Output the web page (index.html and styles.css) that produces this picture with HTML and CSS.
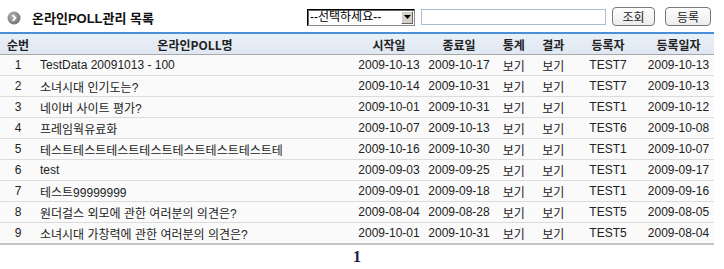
FILE: index.html
```html
<!DOCTYPE html>
<html lang="ko">
<head>
<meta charset="utf-8">
<title>온라인POLL관리 목록</title>
<link rel="stylesheet" href="styles.css">
</head>
<body>
<div class="page">
  <div class="topbar">
    <div class="title">
      <svg class="bullet" width="14" height="14" viewBox="0 0 14 14">
        <defs>
          <radialGradient id="g" cx="40%" cy="35%" r="70%">
            <stop offset="0" stop-color="#b4b4b4"/>
            <stop offset="1" stop-color="#6e6e6e"/>
          </radialGradient>
        </defs>
        <circle cx="7" cy="7" r="6.5" fill="url(#g)"/>
        <path d="M5.6 4.2 L8.4 7 L5.6 9.8" fill="none" stroke="#fff" stroke-width="1.8"/>
      </svg>
      <span>온라인POLL관리 목록</span>
    </div>
    <div class="search">
      <div class="selectbox">
        <span class="seltext">--선택하세요--</span>
        <span class="selarrow">
          <svg width="9" height="6" viewBox="0 0 9 6"><path d="M1 1 L8 1 L4.5 5 Z" fill="#000"/></svg>
        </span>
      </div>
      <input class="keyword" type="text">
      <button class="btn btn-search">조회</button>
      <button class="btn btn-reg">등록</button>
    </div>
  </div>
  <table class="list">
    <thead>
      <tr>
        <th class="c-no">순번</th>
        <th class="c-name">온라인POLL명</th>
        <th class="c-date">시작일</th>
        <th class="c-date">종료일</th>
        <th class="c-view">통계</th>
        <th class="c-view">결과</th>
        <th class="c-user">등록자</th>
        <th class="c-reg">등록일자</th>
      </tr>
    </thead>
    <tbody>
      <tr><td>1</td><td class="name">TestData 20091013 - 100</td><td>2009-10-13</td><td>2009-10-17</td><td>보기</td><td>보기</td><td>TEST7</td><td>2009-10-13</td></tr>
      <tr><td>2</td><td class="name">소녀시대 인기도는?</td><td>2009-10-14</td><td>2009-10-31</td><td>보기</td><td>보기</td><td>TEST7</td><td>2009-10-13</td></tr>
      <tr><td>3</td><td class="name">네이버 사이트 평가?</td><td>2009-10-01</td><td>2009-10-31</td><td>보기</td><td>보기</td><td>TEST1</td><td>2009-10-12</td></tr>
      <tr><td>4</td><td class="name">프레임웍유료화</td><td>2009-10-07</td><td>2009-10-13</td><td>보기</td><td>보기</td><td>TEST6</td><td>2009-10-08</td></tr>
      <tr><td>5</td><td class="name">테스트테스트테스트테스트테스트테스트테스트테</td><td>2009-10-16</td><td>2009-10-30</td><td>보기</td><td>보기</td><td>TEST1</td><td>2009-10-07</td></tr>
      <tr><td>6</td><td class="name">test</td><td>2009-09-03</td><td>2009-09-25</td><td>보기</td><td>보기</td><td>TEST1</td><td>2009-09-17</td></tr>
      <tr><td>7</td><td class="name">테스트99999999</td><td>2009-09-01</td><td>2009-09-18</td><td>보기</td><td>보기</td><td>TEST1</td><td>2009-09-16</td></tr>
      <tr><td>8</td><td class="name">원더걸스 외모에 관한 여러분의 의견은?</td><td>2009-08-04</td><td>2009-08-28</td><td>보기</td><td>보기</td><td>TEST5</td><td>2009-08-05</td></tr>
      <tr><td>9</td><td class="name">소녀시대 가창력에 관한 여러분의 의견은?</td><td>2009-10-01</td><td>2009-10-31</td><td>보기</td><td>보기</td><td>TEST5</td><td>2009-08-04</td></tr>
    </tbody>
  </table>
  <div class="paging">1</div>
</div>
</body>
</html>
```
FILE: styles.css
```css
html, body {
  margin: 0;
  padding: 0;
  background: #fff;
}
body {
  font-family: "Liberation Sans", "Noto Sans CJK KR", sans-serif;
  font-size: 12px;
  color: #222;
}
.page {
  width: 714px;
}
.topbar {
  height: 32px;
  display: flex;
  align-items: flex-start;
  justify-content: space-between;
}
.title {
  display: flex;
  align-items: center;
  gap: 11px;
  padding: 8px 0 0 7px;
  font-size: 13px;
  font-weight: bold;
  color: #111;
}
.bullet {
  display: block;
}
.search {
  display: flex;
  align-items: center;
  padding-top: 7px;
  padding-right: 3px;
}
.selectbox {
  position: relative;
  width: 106px;
  height: 15px;
  border: 1px solid #000;
  border-right-color: #888;
  border-bottom-color: #888;
  box-shadow: inset 1px 1px 0 #666;
  background: #fff;
  margin-top: 1px;
}
.seltext {
  display: block;
  padding-left: 2px;
  line-height: 15px;
  font-size: 12px;
  color: #000;
}
.selarrow {
  position: absolute;
  right: 1px;
  top: 1px;
  width: 12px;
  height: 13px;
  background: #d4d0c8;
  border: 1px solid #fff;
  border-right-color: #666;
  border-bottom-color: #666;
  box-sizing: border-box;
  display: flex;
  align-items: center;
  justify-content: center;
}
.keyword {
  width: 185px;
  height: 16px;
  box-sizing: border-box;
  border: 1px solid #a9bdd6;
  margin: 0 0 0 6px;
  padding: 0;
  background: #fff;
}
.btn {
  height: 19px;
  box-sizing: border-box;
  border: 1px solid #7a7a7a;
  border-radius: 4px;
  background: linear-gradient(#fdfdfd, #ececec);
  font-family: "Noto Sans CJK KR", sans-serif;
  font-size: 12px;
  line-height: 15px;
  color: #222;
  padding: 0;
}
.btn-search {
  width: 43px;
  margin-left: 6px;
}
.btn-reg {
  width: 46px;
  margin-left: 10px;
}
.list {
  width: 714px;
  border-collapse: collapse;
  table-layout: fixed;
  border-top: 2px solid #4a90d9;
  border-bottom: 2px solid #c4c4c4;
}
.list th {
  height: 20px;
  padding: 0;
  background: linear-gradient(#eaf0f7, #dfe7f1);
  border-bottom: 1px solid #a8a8a8;
  font-weight: bold;
  font-size: 12px;
  color: #222;
  text-align: center;
  font-family: "Noto Sans CJK KR", sans-serif;
}
.c-no { width: 36px; }
.c-name { width: 318px; }
.c-date { width: 70px; }
.c-view { width: 39.5px; }
.c-user { width: 70px; }
.c-reg { width: 71px; }
.list td {
  height: 20px;
  padding: 0;
  border-bottom: 1px solid #dcdcdc;
  text-align: center;
  white-space: nowrap;
  overflow: hidden;
  color: #222;
  background: #fafafa;
}
.list tbody tr:last-child td {
  border-bottom: none;
}
.list td.name {
  text-align: left;
  padding-left: 4px;
}
.paging {
  text-align: center;
  padding-top: 3px;
  font-family: "Liberation Serif", serif;
  font-weight: bold;
  font-size: 16px;
  color: #1a1a50;
}
```
